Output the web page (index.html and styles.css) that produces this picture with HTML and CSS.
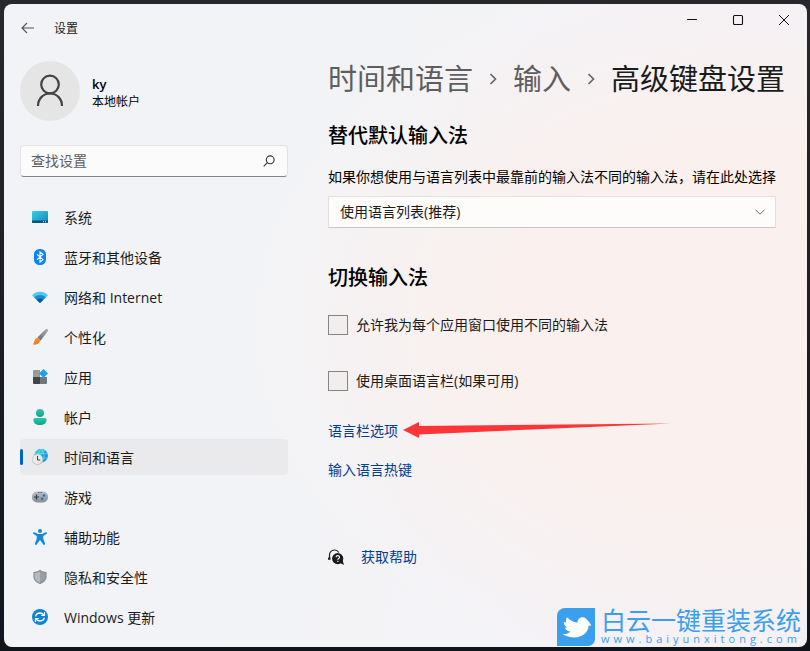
FILE: index.html
```
<!DOCTYPE html>
<html lang="zh-CN">
<head>
<meta charset="utf-8">
<meta name="viewport" content="width=device-width, initial-scale=1">
<title>设置</title>
<link rel="stylesheet" href="styles.css">
</head>
<body>
<div class="window">
  <header class="titlebar">
    <button class="back" type="button" aria-label="返回">
      <svg width="14" height="12" viewBox="0 0 14 12"><path d="M13 6H1.2M6 1 1 6l5 5" fill="none" stroke="#555" stroke-width="1.1"/></svg>
    </button>
    <span class="app-title">设置</span>
    <div class="window-controls">
      <button type="button" aria-label="最小化"><svg width="12" height="12" viewBox="0 0 12 12"><path d="M1 5.5h10" stroke="#111"/></svg></button>
      <button type="button" aria-label="最大化"><svg width="12" height="12" viewBox="0 0 12 12"><rect x="1.5" y="1.5" width="9" height="9" rx="1" fill="none" stroke="#111" stroke-width="1.1"/></svg></button>
      <button type="button" aria-label="关闭"><svg width="12" height="12" viewBox="0 0 12 12"><path d="m1 1 10 10M11 1 1 11" stroke="#111"/></svg></button>
    </div>
  </header>

  <div class="columns">
    <aside class="sidebar">
      <div class="account">
        <span class="avatar">
          <svg width="30" height="34" viewBox="0 0 30 34" fill="none" stroke="#444" stroke-width="2.2"><circle cx="15" cy="10.5" r="8.8"/><path d="M3 32c0-7 5-12.500 12-12.500S27 25 27 32"/></svg>
        </span>
        <span class="account-text"><strong>ky</strong><span>本地帐户</span></span>
      </div>

      <div class="search">
        <input type="search" placeholder="查找设置" aria-label="查找设置">
        <svg width="12" height="12" viewBox="0 0 12 12" fill="none" stroke="#333" stroke-width="1.1"><circle cx="7.200" cy="4.800" r="3.900"/><path d="M4.400 7.600.7 11.300"/></svg>
      </div>

      <nav class="nav">
        <a href="#system">
          <svg width="16" height="16" viewBox="0 0 16 16"><defs><linearGradient id="g-sys" x1="0" y1="0" x2="1" y2="1"><stop offset="0" stop-color="#34d2e8"/><stop offset="1" stop-color="#1684bd"/></linearGradient></defs><rect y="2" width="16" height="12" rx="1" fill="url(#g-sys)"/><path d="M0 11.500h16V13a1 1 0 0 1-1 1H1a1 1 0 0 1-1-1z" fill="#0c5575"/><path d="M11 12.200h1v1h-1zM13 12.200h1v1h-1z" fill="#d8f2fa"/></svg>
          <span>系统</span></a>
        <a href="#bluetooth">
          <svg width="16" height="16" viewBox="0 0 16 16"><rect x="2" width="12" height="16" rx="5.500" fill="#0a84f8"/><path d="m5 5.300 6 5.400-3 2.500V2.800l3 2.500-6 5.400" fill="none" stroke="#fff" stroke-width="1.100"/></svg>
          <span>蓝牙和其他设备</span></a>
        <a href="#network">
          <svg width="16" height="16" viewBox="0 0 16 16"><path d="M0 6.200C4.500 1.600 11.500 1.600 16 6.200L8 14z" fill="#4cc8f3"/><path d="M2.300 8.400c3.200-3.200 8.200-3.200 11.400 0L8 14z" fill="#188bd5"/><path d="M4.700 10.800c1.900-1.800 4.700-1.800 6.600 0L8 14z" fill="#0c54a0"/></svg>
          <span>网络和 Internet</span></a>
        <a href="#personalization">
          <svg width="16" height="16" viewBox="0 0 16 16"><defs><linearGradient id="g-br" x1="1" y1="0" x2="0" y2="1"><stop offset="0" stop-color="#a4adb6"/><stop offset="1" stop-color="#626d78"/></linearGradient><linearGradient id="g-tip" x1="0" y1="0" x2="1" y2="1"><stop offset="0" stop-color="#f9ae40"/><stop offset="1" stop-color="#e85f12"/></linearGradient></defs><path d="M15.600.4c.7.700.4 1.500-.1 2.200L8.600 11.700 5.400 8.600 13.400.6c.8-.6 1.700-.7 2.200-.2z" fill="url(#g-br)"/><path d="M5 9c1.500-.2 3.100 1.200 2.900 2.800-.3 3.200-4.500 4.700-7.300 3.300 1.500-.7 1.300-1.800 1.800-3.300C2.800 10.200 3.700 9.200 5 9z" fill="url(#g-tip)"/></svg>
          <span>个性化</span></a>
        <a href="#apps">
          <svg width="16" height="16" viewBox="0 0 16 16"><path d="M1 2a1 1 0 0 1 1-1h6v7H1z" fill="#969ca4"/><path d="M1 8h7v7H2a1 1 0 0 1-1-1z" fill="#41464b"/><path d="M8 8h7v6a1 1 0 0 1-1 1H8z" fill="#71777f"/><path d="M11.500 0 16 4.500 11.500 9 7 4.500z" fill="#1ca1ef"/></svg>
          <span>应用</span></a>
        <a href="#accounts">
          <svg width="16" height="16" viewBox="0 0 16 16"><defs><linearGradient id="g-acc" x1="0" y1="0" x2="0" y2="1"><stop offset="0" stop-color="#2dc8ac"/><stop offset="1" stop-color="#12a18c"/></linearGradient></defs><circle cx="8" cy="4" r="4" fill="url(#g-acc)"/><path d="M3 9h10c1 0 1.600.8 1.600 1.700 0 3.300-2.800 5.300-6.600 5.300s-6.600-2-6.600-5.300C1.400 9.800 2 9 3 9z" fill="url(#g-acc)"/></svg>
          <span>帐户</span></a>
        <a href="#time-language" class="selected" aria-current="page">
          <svg width="16" height="16" viewBox="0 0 16 16"><circle cx="9.200" cy="6.800" r="6.800" fill="#1c9bd8"/><path d="M2.500 6A6.800 6.800 0 0 1 13.500 1.500L9 7z" fill="#36c6dc"/><path d="M3.200 4.500h12M9.300 9h6M9.300 0c-2.200 2-2.600 4-2.600 6M9.300 0c3.400 4 3.400 9 .6 13.400" fill="none" stroke="#78e0ee" stroke-width=".6"/><circle cx="5.500" cy="10.400" r="5.500" fill="#b9bdc1"/><circle cx="5.400" cy="10.300" r="4.900" fill="#e9e9ea"/><path d="M5.500 7v4h2.800" fill="none" stroke="#444" stroke-width="1"/></svg>
          <span>时间和语言</span></a>
        <a href="#gaming">
          <svg width="16" height="16" viewBox="0 0 16 16"><defs><linearGradient id="g-pad" x1="0" y1="0" x2="0" y2="1"><stop offset="0" stop-color="#b9c0c7"/><stop offset="1" stop-color="#858d96"/></linearGradient></defs><rect y="2.500" width="16" height="11" rx="5" fill="url(#g-pad)"/><path d="M4.500 5.500v5M2 8h5" stroke="#343a40" stroke-width="1.200"/><path d="M6 3h1.500v1H6zM8.500 3H10v1H8.500z" fill="#555c64"/><circle cx="12" cy="6.500" r="1.200" fill="#1473c8"/><circle cx="10" cy="9.700" r="1.200" fill="#1473c8"/></svg>
          <span>游戏</span></a>
        <a href="#accessibility">
          <svg width="16" height="16" viewBox="0 0 16 16"><g fill="#1787d9"><circle cx="8" cy="2" r="2"/><path d="M2.400 3.200 6 5h4l3.600-1.800c1.200-.4 1.900 1.200.8 1.800L11.200 7v2.500l1.800 5c.3 1.400-1.400 1.900-1.900.8L8 11l-3.100 4.300c-.5 1.100-2.200.6-1.900-.8l1.800-5V7L1.600 5c-1.100-.6-.4-2.200.8-1.800z"/></g></svg>
          <span>辅助功能</span></a>
        <a href="#privacy">
          <svg width="16" height="16" viewBox="0 0 16 16"><path d="M8 .8c2 1.500 4.200 2.200 6.600 2.200v4.500c0 3.600-2.600 6-6.600 7.700C4 13.500 1.400 11.100 1.400 7.500V3C3.800 3 6 2.300 8 .8z" fill="#868c93"/><path d="M8 2.200C6.300 3.300 4.500 4 2.500 4.100v3.400C2.500 10.300 4.600 12.500 8 14z" fill="#b4b9be"/><path d="M8 2.200C9.700 3.300 11.500 4 13.500 4.100v3.400c0 2.800-2.100 5-5.500 6.500z" fill="#999fa5"/></svg>
          <span>隐私和安全性</span></a>
        <a href="#update">
          <svg width="16" height="16" viewBox="0 0 16 16"><circle cx="8" cy="8" r="8" fill="#0d83d8"/><path d="M3.700 7.300C4 5.300 5.800 4 8 4c1.600 0 2.900.7 3.700 1.900M12.300 8.700C12 10.700 10.200 12 8 12c-1.600 0-2.900-.7-3.700-1.900" fill="none" stroke="#fff" stroke-width="1.300"/><path d="M12.500 3v3.300H9.200M3.500 13V9.700h3.300" fill="none" stroke="#fff" stroke-width="1.200"/></svg>
          <span>Windows 更新</span></a>
      </nav>
    </aside>

    <main class="content">
      <h1 class="breadcrumb">
        <a href="#time-language">时间和语言</a>
        <svg width="8" height="12" viewBox="0 0 8 12"><path d="m1.500 1 5 5-5 5" fill="none" stroke="#666" stroke-width="1.700"/></svg>
        <a href="#input">输入</a>
        <svg width="8" height="12" viewBox="0 0 8 12"><path d="m1.500 1 5 5-5 5" fill="none" stroke="#666" stroke-width="1.700"/></svg>
        <span>高级键盘设置</span>
      </h1>

      <section>
        <h2>替代默认输入法</h2>
        <label class="hint" for="method">如果你想使用与语言列表中最靠前的输入法不同的输入法，请在此处选择</label>
        <div class="dropdown">
          <select id="method"><option>使用语言列表(推荐)</option></select>
          <svg width="10" height="6" viewBox="0 0 10 6"><path d="m.5.700 4.500 4.500L9.500.7" fill="none" stroke="#666"/></svg>
        </div>
      </section>

      <section class="switching">
        <h2>切换输入法</h2>
        <label class="check"><input type="checkbox">允许我为每个应用窗口使用不同的输入法</label>
        <label class="check"><input type="checkbox">使用桌面语言栏(如果可用)</label>
        <div class="links">
          <span class="pointed">
            <a href="#language-bar">语言栏选项</a>
            <svg class="arrow" width="270" height="18" viewBox="0 0 270 18"><path d="m1 9 16-8v4L269 2.500 17 13.500v3.500z" fill="#fc3638"/></svg>
          </span>
          <a href="#hotkeys">输入语言热键</a>
        </div>
      </section>

      <div class="help">
        <svg width="16" height="16" viewBox="0 0 16 16"><path d="M1.500 9.500V6a5 5 0 0 1 9.300-2.500" fill="none" stroke="#222" stroke-width="1.200"/><path d="M0 8.500h2.500v2.300H0z" fill="#222"/><circle cx="9.700" cy="9.600" r="5.600" fill="#1a1a1a"/><path d="m12 14 4 2-1.500-5z" fill="#1a1a1a"/><path d="M8 8.300c0-2.300 3.500-2.200 3.500-.1 0 1.300-1.700 1.300-1.700 2.500M9.800 11.700v1.200" fill="none" stroke="#fff" stroke-width="1.100"/></svg>
        <a href="#help">获取帮助</a>
      </div>
    </main>
  </div>
</div>

<div class="watermark">
  <svg width="38" height="38" viewBox="0 0 38 38"><path d="M8 0h30v31a7 7 0 0 1-7 7H0V8a8 8 0 0 1 8-8z" fill="#3b9fee"/><path d="M5.500 26c3.500.3 5.800-.5 7.800-2.300-3-.6-4.600-2-5.300-4.200h2.500c-2.500-1.400-3.800-3.200-3.800-5.600l2.600.6C8.800 12.800 8.900 10.900 10 9.200c2.800 2.800 6 4.900 10.500 5.600-.2-3.300 2-5.600 5-5.600 1.900 0 3.300.8 4.300 2.200l2.800 3.100 1.600 3-2.600.2C31.200 24.500 25 29.400 17.500 29.400c-4.500 0-8.800-1-12-3.400z" fill="#fff"/></svg>
  <div class="watermark-text"><span class="brand">白云一键重装系统</span><span class="site">www.baiyunxitong.com</span></div>
</div>
</body>
</html>
```
FILE: styles.css
```
* {
  box-sizing: border-box;
}

body {
  margin: 0;
  padding: 4px 3px 4px 4px;
  min-height: 100vh;
  display: flex;
  position: relative;
  background: linear-gradient(#27282d, #10151d);
  color: #1b1b1b;
  font: 14px/20px "Open Sans", "Noto Sans CJK SC", sans-serif;
}

button,
input,
select {
  font: inherit;
  color: inherit;
}

svg {
  display: block;
  flex: none;
}

a {
  color: #003e92;
  text-decoration: none;
}

.window {
  flex: 1;
  min-width: 0;
  border-radius: 8px;
  overflow: hidden;
  background:
    radial-gradient(ellipse 62% 56% at 92% 50%, #faf0ed 45%, #faf0ed00 100%),
    linear-gradient(100deg, #f1f3f7, #f3f3f6 50%, #f4f1f6);
}

.titlebar {
  display: flex;
  height: 48px;
  padding-left: 10px;
  align-items: center;
}

.titlebar button {
  display: grid;
  place-items: center;
  height: 32px;
  padding: 0;
  border: 0;
  background: none;
}

.titlebar .back {
  width: 28px;
}

.app-title {
  margin-left: 12px;
  padding-top: 2px;
  font-size: 12px;
}

.window-controls {
  display: flex;
  align-self: flex-start;
  margin-left: auto;
}

.window-controls button {
  width: 46px;
}

.columns {
  display: flex;
}

.sidebar {
  flex: none;
  width: 284px;
  padding: 9px 0 12px 16px;
}

.account {
  display: flex;
  align-items: center;
  gap: 12px;
}

.avatar {
  display: grid;
  place-items: center;
  width: 60px;
  height: 60px;
  border-radius: 50%;
  background: #e5e5e5;
}

.account-text {
  display: flex;
  flex-direction: column;
  padding-top: 4px;
  font-size: 12px;
  line-height: 18px;
  color: #000;
}

.account-text strong {
  font-size: 13px;
  font-weight: 600;
}

.search {
  display: flex;
  align-items: center;
  height: 32px;
  margin-top: 24px;
  padding: 0 12px 0 10px;
  border: 1px solid #e3e3e5;
  border-bottom-color: #868688;
  border-radius: 4px;
  background: #fbfbfc;
}

.search input {
  flex: 1;
  min-width: 0;
  padding: 0;
  border: 0;
  outline: 0;
  background: none;
}

.search input::placeholder {
  color: #5f5f60;
}

.nav {
  display: flex;
  flex-direction: column;
  gap: 4px;
  margin-top: 22px;
}

.nav a {
  display: flex;
  align-items: center;
  gap: 16px;
  height: 36px;
  padding-left: 12px;
  border-radius: 4px;
  color: #1b1b1b;
}

.nav span {
  padding-top: 2px;
}

.nav .selected {
  position: relative;
  background: #eae9eb;
}

.nav .selected::before {
  content: "";
  position: absolute;
  left: 0;
  top: 10px;
  width: 3px;
  height: 16px;
  border-radius: 2px;
  background: #0067c0;
}

.content {
  flex: 1;
  min-width: 0;
  padding: 7px 31px 12px 40px;
}

.breadcrumb {
  display: flex;
  align-items: center;
  gap: 16px;
  margin: 0;
  font-size: 29px;
  line-height: 40px;
  font-weight: 400;
  white-space: nowrap;
}

.breadcrumb a {
  color: #5e5e60;
}

h2 {
  margin: 0;
  font-size: 20px;
  line-height: 28px;
  font-weight: 500;
  color: #000;
}

section {
  margin-top: 23px;
}

.hint {
  display: block;
  margin-top: 17px;
  color: #000;
}

.dropdown {
  position: relative;
  margin-top: 9px;
}

.dropdown select {
  display: block;
  appearance: none;
  width: 100%;
  height: 32px;
  padding: 0 32px 0 11px;
  border: 1px solid #e6dfe0;
  border-bottom-color: #c9c5c6;
  border-radius: 0;
  background: #fdfcfb;
}

.dropdown svg {
  position: absolute;
  right: 11px;
  top: 13px;
  pointer-events: none;
}

.switching {
  margin-top: 36px;
}

.check {
  display: flex;
  align-items: center;
  gap: 8px;
  margin-top: 36px;
}

h2 + .check {
  margin-top: 23px;
}

.check input {
  appearance: none;
  width: 20px;
  height: 20px;
  margin: 0;
  border: 1px solid #868586;
  background: #f2eeee;
}

.links {
  display: flex;
  flex-direction: column;
  align-items: flex-start;
  gap: 19px;
  margin-top: 30px;
}

.pointed {
  position: relative;
}

.arrow {
  position: absolute;
  left: calc(100% + 4px);
  top: 0;
}

.help {
  display: flex;
  align-items: center;
  gap: 17px;
  margin-top: 67px;
}

.watermark {
  position: absolute;
  right: 9px;
  bottom: 5px;
  display: flex;
  gap: 6px;
  color: #3b9fee;
}

.watermark-text {
  display: flex;
  flex-direction: column;
}

.brand {
  font-size: 25px;
  line-height: 25px;
}

.site {
  font-size: 11px;
  line-height: 12px;
  letter-spacing: 4px;
}
```
